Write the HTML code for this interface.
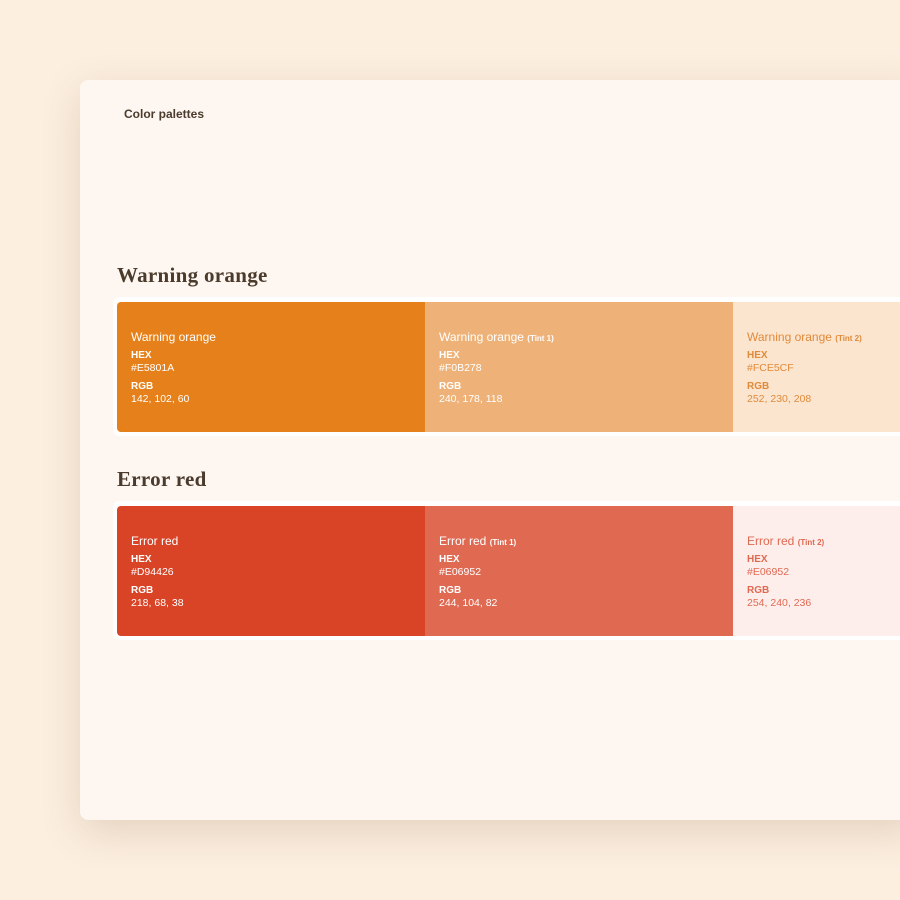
<!DOCTYPE html>
<html><head><style>
*{margin:0;padding:0;box-sizing:border-box}
body{width:900px;height:900px;background:#fcefe0;position:relative;overflow:hidden;font-family:"Liberation Sans",sans-serif}
.card{position:absolute;left:80px;top:80px;width:840px;height:740px;background:#fef6f0;border-radius:8px;box-shadow:0 12px 40px rgba(120,80,40,.18)}
.t{position:absolute;left:124px;top:107px;font-size:12px;font-weight:bold;color:#4a3b2c}
h2{position:absolute;left:117px;font-family:"Liberation Serif",serif;font-weight:bold;font-size:21px;color:#4a3b2c;letter-spacing:.3px}
.row{position:absolute;left:113px;width:800px;height:139px;background:#fff;border-radius:6px;padding:5px 0 4px 4px;display:flex}
.sw{flex:0 0 308px;width:308px;height:130px;padding:28px 14px;font-size:11px;line-height:12px}
.sw:first-child{border-radius:4px 0 0 4px}
.n{font-size:12px;line-height:14px;margin-bottom:6px}
.n small{font-size:8px;font-weight:bold;line-height:0}
.k{font-weight:bold;font-size:10px}
.v{margin-bottom:7px;font-size:10.5px}
</style></head><body>
<div class="card"></div>
<div class="t">Color palettes</div>
<h2 style="top:263px">Warning orange</h2>
<div class="row" style="top:297px">
<div class="sw" style="background:#e5801a;color:#fff"><div class="n">Warning orange</div><div class="k">HEX</div><div class="v">#E5801A</div><div class="k">RGB</div><div class="v">142, 102, 60</div></div>
<div class="sw" style="background:#eeb278;color:#fff"><div class="n">Warning orange <small>(Tint 1)</small></div><div class="k">HEX</div><div class="v">#F0B278</div><div class="k">RGB</div><div class="v">240, 178, 118</div></div>
<div class="sw" style="background:#fce5cf;color:#e08a3a"><div class="n">Warning orange <small>(Tint 2)</small></div><div class="k">HEX</div><div class="v">#FCE5CF</div><div class="k">RGB</div><div class="v">252, 230, 208</div></div>
</div>
<h2 style="top:467px">Error red</h2>
<div class="row" style="top:501px">
<div class="sw" style="background:#d94426;color:#fff"><div class="n">Error red</div><div class="k">HEX</div><div class="v">#D94426</div><div class="k">RGB</div><div class="v">218, 68, 38</div></div>
<div class="sw" style="background:#e06952;color:#fff"><div class="n">Error red <small>(Tint 1)</small></div><div class="k">HEX</div><div class="v">#E06952</div><div class="k">RGB</div><div class="v">244, 104, 82</div></div>
<div class="sw" style="background:#feeeeb;color:#e06952"><div class="n">Error red <small>(Tint 2)</small></div><div class="k">HEX</div><div class="v">#E06952</div><div class="k">RGB</div><div class="v">254, 240, 236</div></div>
</div>
</body></html>
